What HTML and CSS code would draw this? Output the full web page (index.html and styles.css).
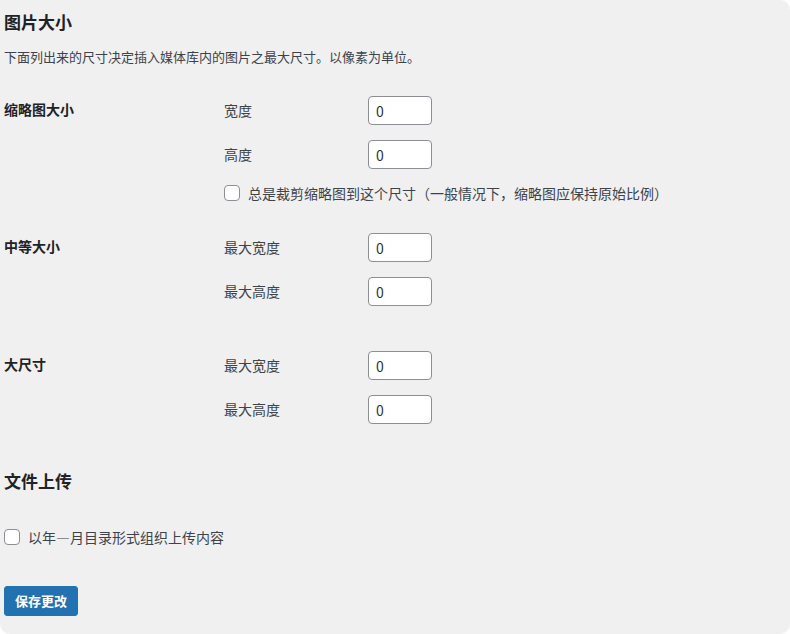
FILE: index.html
```html
<!DOCTYPE html>
<html lang="zh-CN">
<head>
    <meta charset="UTF-8">
    <meta name="viewport" content="width=device-width, initial-scale=1.0">
    <title>媒体设置</title>
    <link rel="stylesheet" href="styles.css">
</head>
<body>
    <form class="wrap">
        <h2 class="title">图片大小</h2>
        <p class="description">下面列出来的尺寸决定插入媒体库内的图片之最大尺寸。以像素为单位。</p>

        <div class="size-row thumb-row">
            <div class="row-label">缩略图大小</div>
            <div class="row-fields">
                <div class="field">
                    <label for="thumbnail_size_w">宽度</label>
                    <input type="text" id="thumbnail_size_w" value="0">
                </div>
                <div class="field">
                    <label for="thumbnail_size_h">高度</label>
                    <input type="text" id="thumbnail_size_h" value="0">
                </div>
                <label class="check">
                    <input type="checkbox"> 总是裁剪缩略图到这个尺寸（一般情况下，缩略图应保持原始比例）
                </label>
            </div>
        </div>

        <div class="size-row medium-row">
            <div class="row-label">中等大小</div>
            <div class="row-fields">
                <div class="field">
                    <label for="medium_size_w">最大宽度</label>
                    <input type="text" id="medium_size_w" value="0">
                </div>
                <div class="field">
                    <label for="medium_size_h">最大高度</label>
                    <input type="text" id="medium_size_h" value="0">
                </div>
            </div>
        </div>

        <div class="size-row large-row">
            <div class="row-label">大尺寸</div>
            <div class="row-fields">
                <div class="field">
                    <label for="large_size_w">最大宽度</label>
                    <input type="text" id="large_size_w" value="0">
                </div>
                <div class="field">
                    <label for="large_size_h">最大高度</label>
                    <input type="text" id="large_size_h" value="0">
                </div>
            </div>
        </div>

        <h2 class="title upload-title">文件上传</h2>

        <label class="check upload-check">
            <input type="checkbox"> 以年—月目录形式组织上传内容
        </label>

        <div class="submit">
            <button type="button" class="button-primary">保存更改</button>
        </div>
    </form>
</body>
</html>
```

FILE: styles.css
```css
body {
    margin: 0;
    background: #ffffff;
    font-family: "Noto Sans CJK SC", "Noto Sans", sans-serif;
    font-size: 13px;
    color: #3c434a;
}
.wrap {
    box-sizing: border-box;
    height: 634px;
    margin: 0;
    padding: 0 4px;
    background: #f0f0f1;
    border-radius: 0 10px 10px 10px;
    overflow: hidden;
}
.title {
    margin: 11px 0 0;
    font-size: 17px;
    line-height: 22px;
    font-weight: 700;
    color: #1d2327;
}
.description {
    margin: 14px 0 0;
    font-size: 13px;
    line-height: 20px;
    color: #3c434a;
}
.size-row {
    display: grid;
    grid-template-columns: 220px 1fr;
}
.thumb-row {
    margin-top: 29px;
}
.medium-row {
    margin-top: 30px;
}
.large-row {
    margin-top: 45px;
}
.row-label {
    font-size: 14px;
    line-height: 27px;
    font-weight: 700;
    color: #1d2327;
}
.row-fields {
    display: flex;
    flex-direction: column;
    gap: 15px;
}
.field {
    display: flex;
    align-items: center;
    height: 29px;
}
.field label {
    width: 144px;
    padding-bottom: 2px;
    font-size: 14px;
    color: #3c434a;
}
.field input {
    box-sizing: border-box;
    width: 64px;
    height: 29px;
    margin: 0;
    padding: 0 7px;
    border: 1px solid #8c8f94;
    border-radius: 4px;
    background: #ffffff;
    font-family: inherit;
    font-size: 14px;
    color: #2c3338;
}
.check {
    display: flex;
    align-items: center;
    height: 20px;
    font-size: 14px;
    line-height: 20px;
    color: #3c434a;
}
.thumb-row .check {
    margin-top: -1px;
}
.check input {
    appearance: none;
    box-sizing: border-box;
    width: 16px;
    height: 16px;
    margin: 0 8px 0 0;
    border: 1px solid #8c8f94;
    border-radius: 4px;
    background: #ffffff;
}
.upload-title {
    margin-top: 46px;
}
.upload-check {
    margin-top: 35px;
}
.submit {
    margin-top: 39px;
}
.button-primary {
    height: 30px;
    padding: 0 10px;
    border: 1px solid #2271b1;
    border-radius: 3px;
    background: #2271b1;
    color: #ffffff;
    font-family: inherit;
    font-size: 13px;
    font-weight: 700;
    line-height: 28px;
}
```
